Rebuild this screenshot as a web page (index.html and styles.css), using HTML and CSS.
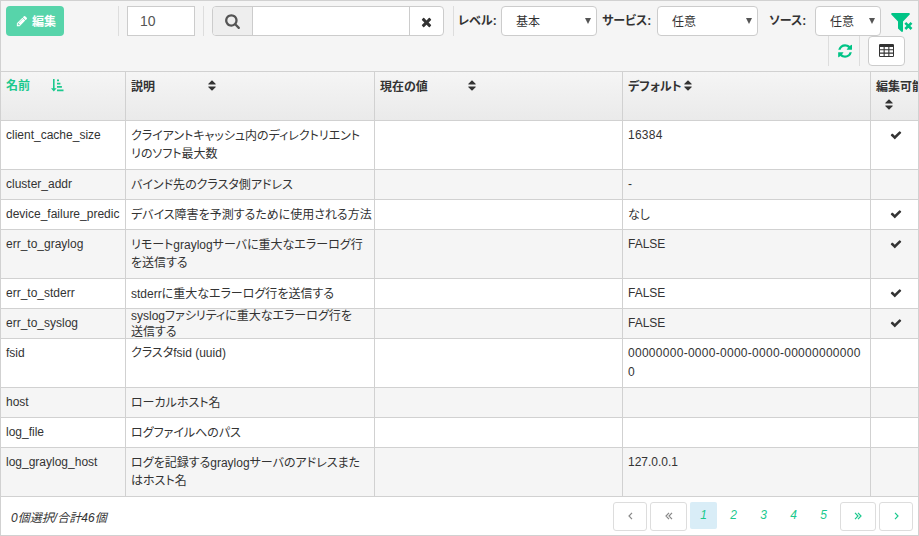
FILE: index.html
```html
<!DOCTYPE html>
<html lang="ja">
<head>
<meta charset="utf-8">
<title>設定</title>
<link rel="stylesheet" href="styles.css">
</head>
<body>
<svg class="defs" width="0" height="0">
  <symbol id="sort" viewBox="0 0 1024 1792"><path d="M1024 1088q0 26-19 45l-448 448q-19 19-45 19t-45-19l-448-448q-19-19-19-45t19-45 45-19h896q26 0 45 19t19 45zM1024 704q0 26-19 45t-45 19h-896q-26 0-45-19t-19-45 19-45l448-448q19-19 45-19t45 19l448 448q19 19 19 45z"/></symbol>
  <symbol id="check" viewBox="0 0 1792 1792"><path d="M1671 566q0 40-28 68l-724 724-136 136q-28 28-68 28t-68-28l-136-136-362-362q-28-28-28-68t28-68l136-136q28-28 68-28t68 28l294 295 656-657q28-28 68-28t68 28l136 136q28 28 28 68z"/></symbol>
  <symbol id="times" viewBox="0 0 1408 1792"><path d="M1298 1322q0 40-28 68l-136 136q-28 28-68 28t-68-28l-294-294-294 294q-28 28-68 28t-68-28l-136-136q-28-28-28-68t28-68l294-294-294-294q-28-28-28-68t28-68l136-136q28-28 68-28t68 28l294 294 294-294q28-28 68-28t68 28l136 136q28 28 28 68t-28 68l-294 294 294 294q28 28 28 68z"/></symbol>
</svg>
<div class="panel">
  <div class="toolbar">
    <div class="line">
      <button class="edit"><svg width="12" height="12" viewBox="0 0 1536 1792"><path d="M363 1536l91-91-235-235-91 91v107h128v128h107zM886 608q0-22-22-22-10 0-17 7l-542 542q-7 7-7 17 0 22 22 22 10 0 17-7l542-542q7-7 7-17zM832 416l416 416-832 832h-416v-416zM1515 512q0 53-37 90l-166 166-416-416 166-165q36-38 90-38 53 0 91 38l235 234q37 39 37 91z"/></svg><span>編集</span></button>
      <i class="divider first"></i>
      <div class="count">10</div>
      <i class="divider"></i>
      <div class="search">
        <span class="addon"><svg width="15" height="16" viewBox="0 0 1664 1792"><path d="M1152 832q0-185-131.5-316.5t-316.5-131.5-316.5 131.5-131.5 316.5 131.5 316.5 316.5 131.5 316.5-131.5 131.5-316.5zM1664 1664q0 52-38 90t-90 38q-54 0-90-38l-343-342q-179 124-399 124-143 0-273.5-55.5t-225-150-150-225-55.5-273.5 55.5-273.5 150-225 225-150 273.5-55.5 273.5 55.5 225 150 150 225 55.5 273.5q0 220-124 399l343 343q37 37 37 90z"/></svg></span>
        <span class="field"></span>
        <span class="clear"><svg width="11" height="14"><use href="#times"/></svg></span>
      </div>
      <i class="divider last"></i>
      <div class="label level">レベル:</div>
      <div class="select w1"><span>基本</span><b></b></div>
      <div class="label service">サービス:</div>
      <div class="select w2"><span>任意</span><b></b></div>
      <div class="label source">ソース:</div>
      <div class="select w3"><span>任意</span><b></b></div>
      <svg class="filter" width="22" height="20" viewBox="0 0 22 20"><path d="M.8 0h17.4q1 .5.5 1.5L12 8.4v9.7q-.4 1.2-1.5.7L7 15.4V8.4L.3 1.5Q-.1.5.8 0z"/><path class="cross" d="M14.3 9.8l6.2 6.2M20.5 9.8L14.3 16"/></svg>
    </div>
    <div class="line second">
      <div class="refresh"><svg width="15" height="16" viewBox="0 0 1664 1792" preserveAspectRatio="none"><path d="M1639 1056q0 5-1 7-64 268-268 434.5t-478 166.5q-146 0-282.5-55t-243.5-157l-129 129q-19 19-45 19t-45-19-19-45v-448q0-26 19-45t45-19h448q26 0 45 19t19 45-19 45l-137 137q71 66 161 102t187 36q134 0 250-65t186-179q11-17 53-117 8-23 30-23h192q13 0 22.5 9.5t9.5 22.5zM1664 256v448q0 26-19 45t-45 19h-448q-26 0-45-19t-19-45 19-45l138-138q-148-137-349-137-134 0-250 65t-186 179q-11 17-53 117-8 23-30 23h-199q-13 0-22.5-9.5t-9.5-22.5v-7q65-268 270-434.5t480-166.5q146 0 284 55.5t245 156.5l130-129q19-19 45-19t45 19 19 45z"/></svg></div>
      <div class="columns"><svg width="15" height="13" viewBox="0 0 15 13"><path fill-rule="evenodd" d="M1.2 0h12.6Q15 0 15 1.2v10.6q0 1.2-1.2 1.2H1.2Q0 13 0 11.8V1.2Q0 0 1.2 0zM1 3v2.2h3.6V3zM5.7 3v2.2h3.6V3zM10.4 3v2.2H14V3zM1 6.3v2.3h3.6V6.3zM5.7 6.3v2.3h3.6V6.3zM10.4 6.3v2.3H14V6.3zM1 9.7V12h3.6V9.7zM5.7 9.7V12h3.6V9.7zM10.4 9.7V12H14V9.7z"/></svg></div>
    </div>
  </div>
  <div class="grid head">
    <div class="sorted"><span class="t-name">名前</span><svg width="13" height="13" viewBox="0 0 13 13"><path d="M2 0h1.6v9.3h2L2.8 12.6 0 9.3h2zM6 .5h2v1.7H6zM6 3.8h3.4v1.7H6zM6 7.1h4.9v1.7H6zM6 10.4h6.5v1.8H6z"/></svg></div>
    <div><span class="t-desc">説明</span><svg width="8" height="13"><use href="#sort"/></svg></div>
    <div><span class="t-now">現在の値</span><svg width="8" height="13"><use href="#sort"/></svg></div>
    <div><span class="t-def">デフォルト</span><svg width="8" height="13"><use href="#sort"/></svg></div>
    <div class="wrap"><span>編集可能</span><svg width="8" height="13"><use href="#sort"/></svg></div>
  </div>
  <div class="grid tall"><div>client_cache_size</div><div class="ja">クライアントキャッシュ内のディレクトリエント<br>リのソフト最大数</div><div></div><div class="number">16384</div><div class="ok"><svg width="12" height="12"><use href="#check"/></svg></div></div>
  <div class="grid odd"><div>cluster_addr</div><div class="ja">バインド先のクラスタ側アドレス</div><div></div><div>-</div><div></div></div>
  <div class="grid"><div>device_failure_predic</div><div class="ja">デバイス障害を予測するために使用される方法</div><div></div><div class="ja">なし</div><div class="ok"><svg width="12" height="12"><use href="#check"/></svg></div></div>
  <div class="grid odd tall"><div>err_to_graylog</div><div class="ja">リモートgraylogサーバに重大なエラーログ行<br>を送信する</div><div></div><div>FALSE</div><div class="ok"><svg width="12" height="12"><use href="#check"/></svg></div></div>
  <div class="grid"><div>err_to_stderr</div><div class="ja">stderrに重大なエラーログ行を送信する</div><div></div><div>FALSE</div><div class="ok"><svg width="12" height="12"><use href="#check"/></svg></div></div>
  <div class="grid odd"><div>err_to_syslog</div><div class="tight">syslogファシリティに重大なエラーログ行を<br>送信する</div><div></div><div>FALSE</div><div class="ok"><svg width="12" height="12"><use href="#check"/></svg></div></div>
  <div class="grid tall"><div>fsid</div><div>クラスタfsid (uuid)</div><div></div><div class="uuid">00000000-0000-0000-0000-00000000000<br>0</div><div></div></div>
  <div class="grid odd"><div>host</div><div class="ja">ローカルホスト名</div><div></div><div></div><div></div></div>
  <div class="grid"><div>log_file</div><div class="ja">ログファイルへのパス</div><div></div><div></div><div></div></div>
  <div class="grid odd tall"><div>log_graylog_host</div><div class="ja">ログを記録するgraylogサーバのアドレスまた<br>はホスト名</div><div></div><div>127.0.0.1</div><div></div></div>
  <div class="footer">
    <div class="total">0個選択/合計46個</div>
    <div class="pages">
      <span class="box off p1"><svg width="5" height="8" viewBox="0 0 5 8"><path d="M4 .8L1 4l3 3.2"/></svg></span>
      <span class="box off p2"><svg width="8" height="8" viewBox="0 0 8 8"><path d="M4 .8L1 4l3 3.2M7 .8L4 4l3 3.2"/></svg></span>
      <span class="num current">1</span><span class="num">2</span><span class="num">3</span><span class="num">4</span><span class="num">5</span>
      <span class="box p3"><svg width="8" height="8" viewBox="0 0 8 8"><path d="M1 .8L4 4 1 7.2M4 .8L7 4 4 7.2"/></svg></span>
      <span class="box p4"><svg width="5" height="8" viewBox="0 0 5 8"><path d="M1 .8L4 4 1 7.2"/></svg></span>
    </div>
  </div>
</div>
</body>
</html>
```
FILE: styles.css
```css
* { box-sizing: border-box; }
body {
  margin: 0;
  font: 12px/18px "Liberation Sans", "Noto Sans CJK JP", sans-serif;
  font-feature-settings: "palt";
  color: #333;
  overflow: hidden;
}
svg { fill: currentColor; flex: none; display: block; }
.defs { position: absolute; }
.panel { width: 919px; height: 536px; border: 1px solid #d1d1d1; overflow: hidden; }
.toolbar { height: 71px; padding: 5px 0 0 5px; background: #f5f5f5; border-bottom: 1px solid #d1d1d1; }
.line { display: flex; height: 30px; }
.edit {
  width: 58px; height: 30px; padding: 0 0 0 10px; border: 0; border-radius: 4px;
  display: flex; align-items: center; gap: 4px;
  background: #57d4aa; color: #fff; font: bold 12px/18px "Liberation Sans", "Noto Sans CJK JP", sans-serif;
}
.edit span { padding-top: 1px; }
.divider { width: 1px; background: #ddd; margin: 0 8px; flex: none; }
.divider.first { margin-left: 54px; }
.divider.last { margin-left: 9px; }
.count { width: 68px; border: 1px solid #ccc; background: #fff; padding-left: 12px; font-size: 14px; line-height: 29px; color: #555; }
.search { display: flex; width: 232px; border: 1px solid #ccc; border-radius: 4px; background: #fff; overflow: hidden; }
.addon { width: 40px; background: #eee; border-right: 1px solid #ccc; display: flex; align-items: center; justify-content: center; color: #555; }
.field { width: 157px; border-right: 1px solid #ccc; }
.clear { flex: 1; display: flex; align-items: center; justify-content: center; padding-top: 2px; }
.label { font-weight: bold; line-height: 30px; white-space: nowrap; flex: none; }
.level { width: 43px; margin-left: -4px; }
.service { width: 60px; padding-left: 5px; }
.source { width: 57px; padding-left: 11px; }
.select {
  border: 1px solid #ccc; border-radius: 4px; background: #fff; height: 30px; flex: none;
  display: flex; align-items: center; justify-content: space-between; padding: 0 5px 0 14px;
}
.select span { padding-top: 2px; }
.select b { border: 3px solid transparent; border-top: 6px solid #555; border-bottom: 0; }
.w1 { width: 96px; }
.w2 { width: 101px; }
.w3 { width: 66px; }
.filter { margin: 7px 0 0 10px; color: #00c486; }
.cross { stroke: #00c486; stroke-width: 2.6; }
.second { justify-content: flex-end; padding-right: 13px; gap: 8px; }
.refresh { width: 32px; border: solid #ddd; border-width: 0 1px; display: flex; align-items: center; justify-content: center; color: #00c486; }
.columns { width: 37px; border: 1px solid #ccc; border-radius: 4px; background: #fff; display: flex; align-items: center; justify-content: center; padding-bottom: 1px; }
.grid { display: grid; grid-template-columns: 125px 249px 248px 248px 47px; height: 30px; background: #fff; border-bottom: 1px solid #d1d1d1; }
.grid > div { padding: 5px 0 0 5px; border-right: 1px solid #d1d1d1; white-space: nowrap; overflow: hidden; }
.grid > div:last-child { border-right: 0; }
.grid > .ja { padding-top: 6px; }
.odd { background: #f5f5f5; }
.tall, .head { height: 49px; }
.grid > .ok { padding: 8px 0 0 19px; }
.grid > .tight { padding-top: 0; margin-top: -1px; line-height: 16px; }
.number { letter-spacing: .25px; }
.grid > .uuid { letter-spacing: .28px; line-height: 19px; }
.head { background: linear-gradient(#f5f5f5, #eaeaea); font-weight: bold; }
.head > div { display: flex; align-items: flex-start; }
.grid.head > div { padding-top: 6px; }
.grid.head > .sorted { color: #1bc98e; padding-top: 5px; }
.head svg { margin-top: 1px; }
.head .sorted svg { margin-top: 2px; }
.t-name { width: 45px; }
.t-desc { width: 77px; }
.t-now { width: 88px; }
.t-def { width: 56px; }
.grid > .wrap { display: block; }
.wrap svg { margin: 2px 0 0 9px; }
.wrap span { display: block; }
.footer { height: 38px; display: flex; justify-content: space-between; background: #fff; font-style: italic; padding: 5px 5px 0 10px; }
.total { padding-top: 7px; letter-spacing: .05px; }
.pages { display: flex; height: 29px; color: #1bc98e; }
.box { border: 1px solid #ddd; border-radius: 3px; display: flex; align-items: center; justify-content: center; padding-bottom: 1px; }
.box svg { fill: none; stroke: currentColor; stroke-width: 1.2; }
.off { color: #888; }
.p1 { width: 34px; margin-right: 3px; }
.p2 { width: 37px; margin-right: 3px; }
.p3 { width: 36px; margin: 0 3px; }
.p4 { width: 34px; }
.num { width: 27px; margin-right: 3px; height: 27px; text-align: center; line-height: 27px; border-radius: 2px; }
.num:nth-of-type(7) { margin-right: 0; }
.current { background: #d9edf7; }
```
